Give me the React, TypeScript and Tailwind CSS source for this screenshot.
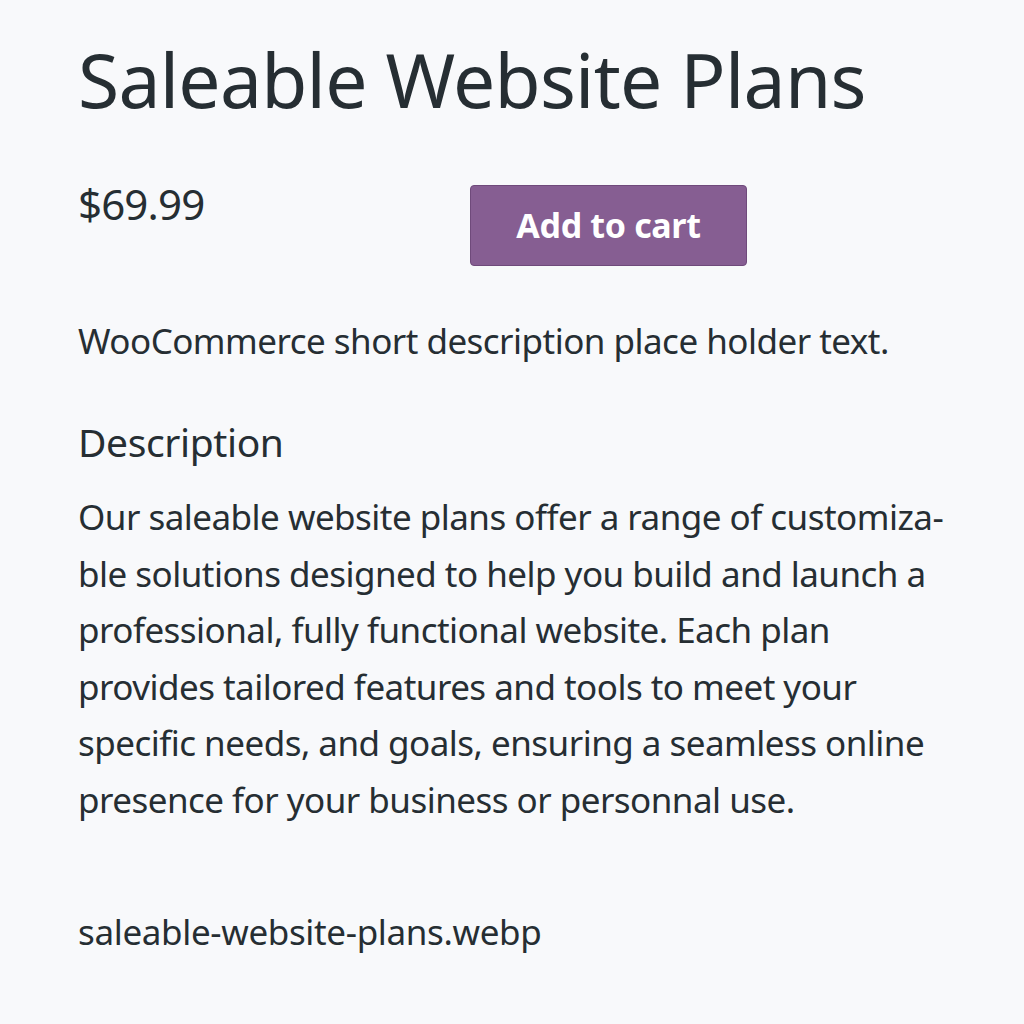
export default function App() {
  return (
    <div className="min-h-screen w-full bg-[#f8f9fb] text-[#262e33] font-['Noto_Sans',sans-serif]">
      <div className="flex flex-col pl-[78px] pt-[34px]">
        <h1 className="text-[75px] leading-[90px] tracking-[-0.01em]">Saleable Website Plans</h1>

        <div className="mt-[56px] flex items-start">
          <p className="w-[392px] text-[42px] leading-[48px] tracking-[-0.02em]">$69.99</p>
          <button className="mt-[5px] h-[81px] w-[277px] rounded-[4px] border border-[#6f4a7b] bg-[#865e92] text-[34px] font-bold text-white tracking-[-0.01em]">
            Add to cart
          </button>
        </div>

        <p className="mt-[51px] text-[35px] leading-[48px] tracking-[-0.015em]">
          WooCommerce short description place holder text.
        </p>

        <h2 className="mt-[53px] text-[39px] leading-[48px] tracking-[-0.01em]">Description</h2>

        <p className="mt-[23px] text-[35px] leading-[56.5px] tracking-[-0.015em]">
          Our saleable website plans offer a range of customiza-
          <br />
          ble solutions designed to help you build and launch a
          <br />
          professional, fully functional website. Each plan
          <br />
          provides tailored features and tools to meet your
          <br />
          specific needs, and goals, ensuring a seamless online
          <br />
          presence for your business or personnal use.
        </p>

        <p className="mt-[80px] text-[35px] leading-[48px] tracking-[-0.01em]">saleable-website-plans.webp</p>
      </div>
    </div>
  )
}
